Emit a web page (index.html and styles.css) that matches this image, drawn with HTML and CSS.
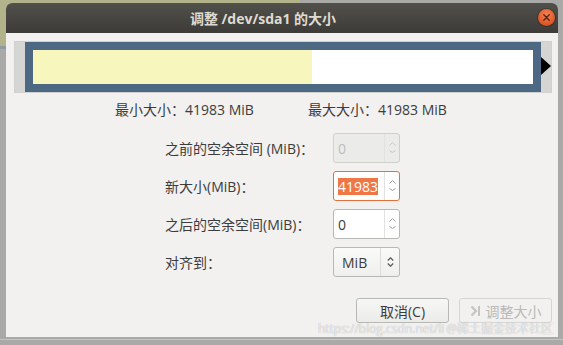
FILE: index.html
```html
<!DOCTYPE html>
<html lang="zh-CN">
<head>
<meta charset="utf-8">
<title>调整 /dev/sda1 的大小</title>
<link rel="stylesheet" href="styles.css">
</head>
<body>
<div class="desk">
  <div class="dialog">
    <div class="titlebar">
      <span class="title">调整 /dev/sda1 的大小</span>
      <span class="close"><svg width="17" height="17" viewBox="0 0 17 17"><path d="M5.8 5.8 L11.2 11.2 M11.2 5.8 L5.8 11.2" stroke="#5a2310" stroke-width="1.4" stroke-linecap="round"/></svg></span>
    </div>
    <div class="content">
      <div class="pbar">
        <div class="strip"></div>
        <div class="pblock">
          <div class="used"></div>
          <div class="free"></div>
        </div>
        <div class="strip right"><span class="arrow"></span></div>
      </div>
      <div class="info">
        <span class="minsize">最小大小：41983 MiB</span>
        <span>最大大小：41983 MiB</span>
      </div>
      <div class="form">
        <div class="label">之前的空余空间 (MiB)：</div>
        <div class="spin disabled">
          <div class="val">0</div>
          <div class="btns"><svg width="7" height="4" viewBox="0 0 7 4"><path d="M0.5 3.5 L3.5 0.5 L6.5 3.5" fill="none" stroke="currentColor"/></svg><svg width="7" height="4" viewBox="0 0 7 4"><path d="M0.5 0.5 L3.5 2.5 L6.5 0.5" fill="none" stroke="currentColor"/></svg></div>
        </div>
        <div class="label">新大小(MiB)：</div>
        <div class="spin focused">
          <div class="val"><span class="sel">41983</span></div>
          <div class="btns"><svg width="7" height="4" viewBox="0 0 7 4"><path d="M0.5 3.5 L3.5 0.5 L6.5 3.5" fill="none" stroke="currentColor"/></svg><svg width="7" height="4" viewBox="0 0 7 4"><path d="M0.5 0.5 L3.5 2.5 L6.5 0.5" fill="none" stroke="currentColor"/></svg></div>
        </div>
        <div class="label">之后的空余空间(MiB)：</div>
        <div class="spin">
          <div class="val">0</div>
          <div class="btns"><svg width="7" height="4" viewBox="0 0 7 4"><path d="M0.5 3.5 L3.5 0.5 L6.5 3.5" fill="none" stroke="currentColor"/></svg><svg width="7" height="4" viewBox="0 0 7 4"><path d="M0.5 0.5 L3.5 2.5 L6.5 0.5" fill="none" stroke="currentColor"/></svg></div>
        </div>
        <div class="label">对齐到：</div>
        <div class="spin combo">
          <div class="val">MiB</div>
          <div class="btns"><svg width="7" height="12" viewBox="0 0 7 12"><path d="M0.8 4.5 L3.5 1.8 L6.2 4.5 M0.8 7.5 L3.5 10.2 L6.2 7.5" fill="none" stroke="#555" stroke-width="1.2"/></svg></div>
        </div>
      </div>
      <div class="buttons">
        <div class="btn">取消(C)</div>
        <div class="btn disabled"><svg width="12" height="14" viewBox="0 0 12 14"><path d="M1.5 2.5 L6 7 L1.5 11.5" fill="none" stroke="#c4c4c4" stroke-width="2.2"/><path d="M9 2 L9 12" stroke="#c4c4c4" stroke-width="2"/></svg>调整大小</div>
      </div>
    </div>
    <div class="watermark">https://blog.csdn.net/li<span class="at">@稀土掘金技术社区</span></div>
  </div>
</div>
</body>
</html>
```
FILE: styles.css
```css
html, body {
  margin: 0;
  padding: 0;
}
body {
  width: 563px;
  height: 345px;
  overflow: hidden;
  font-family: "Open Sans", "Noto Sans CJK SC", sans-serif;
  font-size: 14px;
  color: #3c3c3c;
}
.desk {
  box-sizing: border-box;
  height: 345px;
  padding: 3px 5px 8px 6px;
  background:
    linear-gradient(#b2b38b, #b2b38b) 0 0 / 300px 46px no-repeat,
    linear-gradient(#8f9ba3, #8f9ba3) 0 46px / 6px 3px no-repeat,
    linear-gradient(#c4c4c2, #c4c4c2) 0 339px / 563px 1px no-repeat,
    #a9a9a7;
}
.dialog {
  position: relative;
  width: 552px;
  height: 334px;
  display: flex;
  flex-direction: column;
  background: #f2f1f0;
  border-radius: 6px 6px 0 0;
}
.titlebar {
  position: relative;
  flex: none;
  height: 30px;
  display: flex;
  align-items: center;
  justify-content: center;
  padding-right: 38px;
  background: linear-gradient(#52504b, #3c3b37);
  border-radius: 6px 6px 0 0;
  color: #dfdbd2;
  font-weight: bold;
  font-size: 14px;
}
.close {
  position: absolute;
  right: 3px;
  top: 6px;
  width: 17px;
  height: 17px;
  border-radius: 50%;
  background: radial-gradient(circle at 50% 35%, #f28456, #dc5524 70%, #c24a1c);
  box-shadow: 0 0 0 1px rgba(0, 0, 0, 0.25);
}
.close svg {
  display: block;
}
.content {
  display: flex;
  flex-direction: column;
  padding: 8px 6px 0 8px;
}
.pbar {
  box-sizing: border-box;
  width: 538px;
  height: 52px;
  border: 1px solid #d0d0ce;
  display: flex;
}
.strip {
  width: 10px;
  background: #d5d5d3;
  position: relative;
}
.pblock {
  flex: 1;
  display: flex;
  padding: 8px;
  background: #4d6882;
}
.used {
  width: 279px;
  background: #f7f7bd;
}
.free {
  flex: 1;
  background: #ffffff;
}
.arrow {
  position: absolute;
  left: 0;
  top: 15px;
  width: 0;
  height: 0;
  border-top: 9.5px solid transparent;
  border-bottom: 9.5px solid transparent;
  border-left: 10px solid #000;
}
.info {
  display: flex;
  margin-top: 7px;
  padding-left: 101px;
  line-height: 20px;
}
.minsize {
  width: 193px;
}
.form {
  display: grid;
  grid-template-columns: 168px 67px;
  grid-auto-rows: 30px;
  row-gap: 8px;
  margin-top: 13px;
  padding-left: 151px;
}
.label {
  display: flex;
  align-items: center;
}
.spin {
  box-sizing: border-box;
  display: flex;
  height: 30px;
  border: 1px solid #b8b8b5;
  border-radius: 3px;
  background: #ffffff;
}
.spin .val {
  flex: 1;
  display: flex;
  align-items: center;
  padding-left: 4px;
}
.spin .btns {
  width: 14px;
  border-left: 1px solid #e2e2e0;
  display: flex;
  flex-direction: column;
  align-items: center;
  justify-content: space-between;
  padding: 8px 0 8px;
  color: #9a9a98;
}
.spin .btns svg {
  display: block;
}
.spin.disabled {
  background: #ebebea;
  border-color: #cfcfcd;
  color: #bdbdbb;
}
.spin.disabled .btns {
  color: #c6c6c4;
}
.spin.focused {
  border-color: #e6703d;
}
.sel {
  background: #ef7645;
  color: #ffffff;
  line-height: 17px;
}
.spin.combo {
  background: linear-gradient(#fafaf9, #efefee);
}
.spin.combo .val {
  padding-left: 8px;
}
.spin.combo .btns {
  width: 18px;
  justify-content: center;
  padding: 0;
  border-left-color: #dcdcda;
}
.buttons {
  display: flex;
  justify-content: flex-end;
  gap: 10px;
  margin-top: 21px;
}
.btn {
  box-sizing: border-box;
  width: 93px;
  height: 25px;
  display: flex;
  align-items: center;
  justify-content: center;
  gap: 4px;
  border: 1px solid #b8b8b5;
  border-radius: 3px;
  background: linear-gradient(#f7f7f6, #ebebea);
  font-size: 14px;
}
.btn.disabled {
  border-color: #d6d6d4;
  background: #f2f1f0;
  color: #b9b9b7;
}
.btn.disabled svg {
  display: block;
}
.watermark {
  position: absolute;
  right: 5px;
  bottom: 1px;
  font-size: 12px;
  line-height: 14px;
  color: rgba(255, 255, 255, 0.75);
  text-shadow: 0 0 1px rgba(0, 0, 0, 0.35);
  white-space: nowrap;
}
.watermark .at {
  margin-left: 2px;
}
```
